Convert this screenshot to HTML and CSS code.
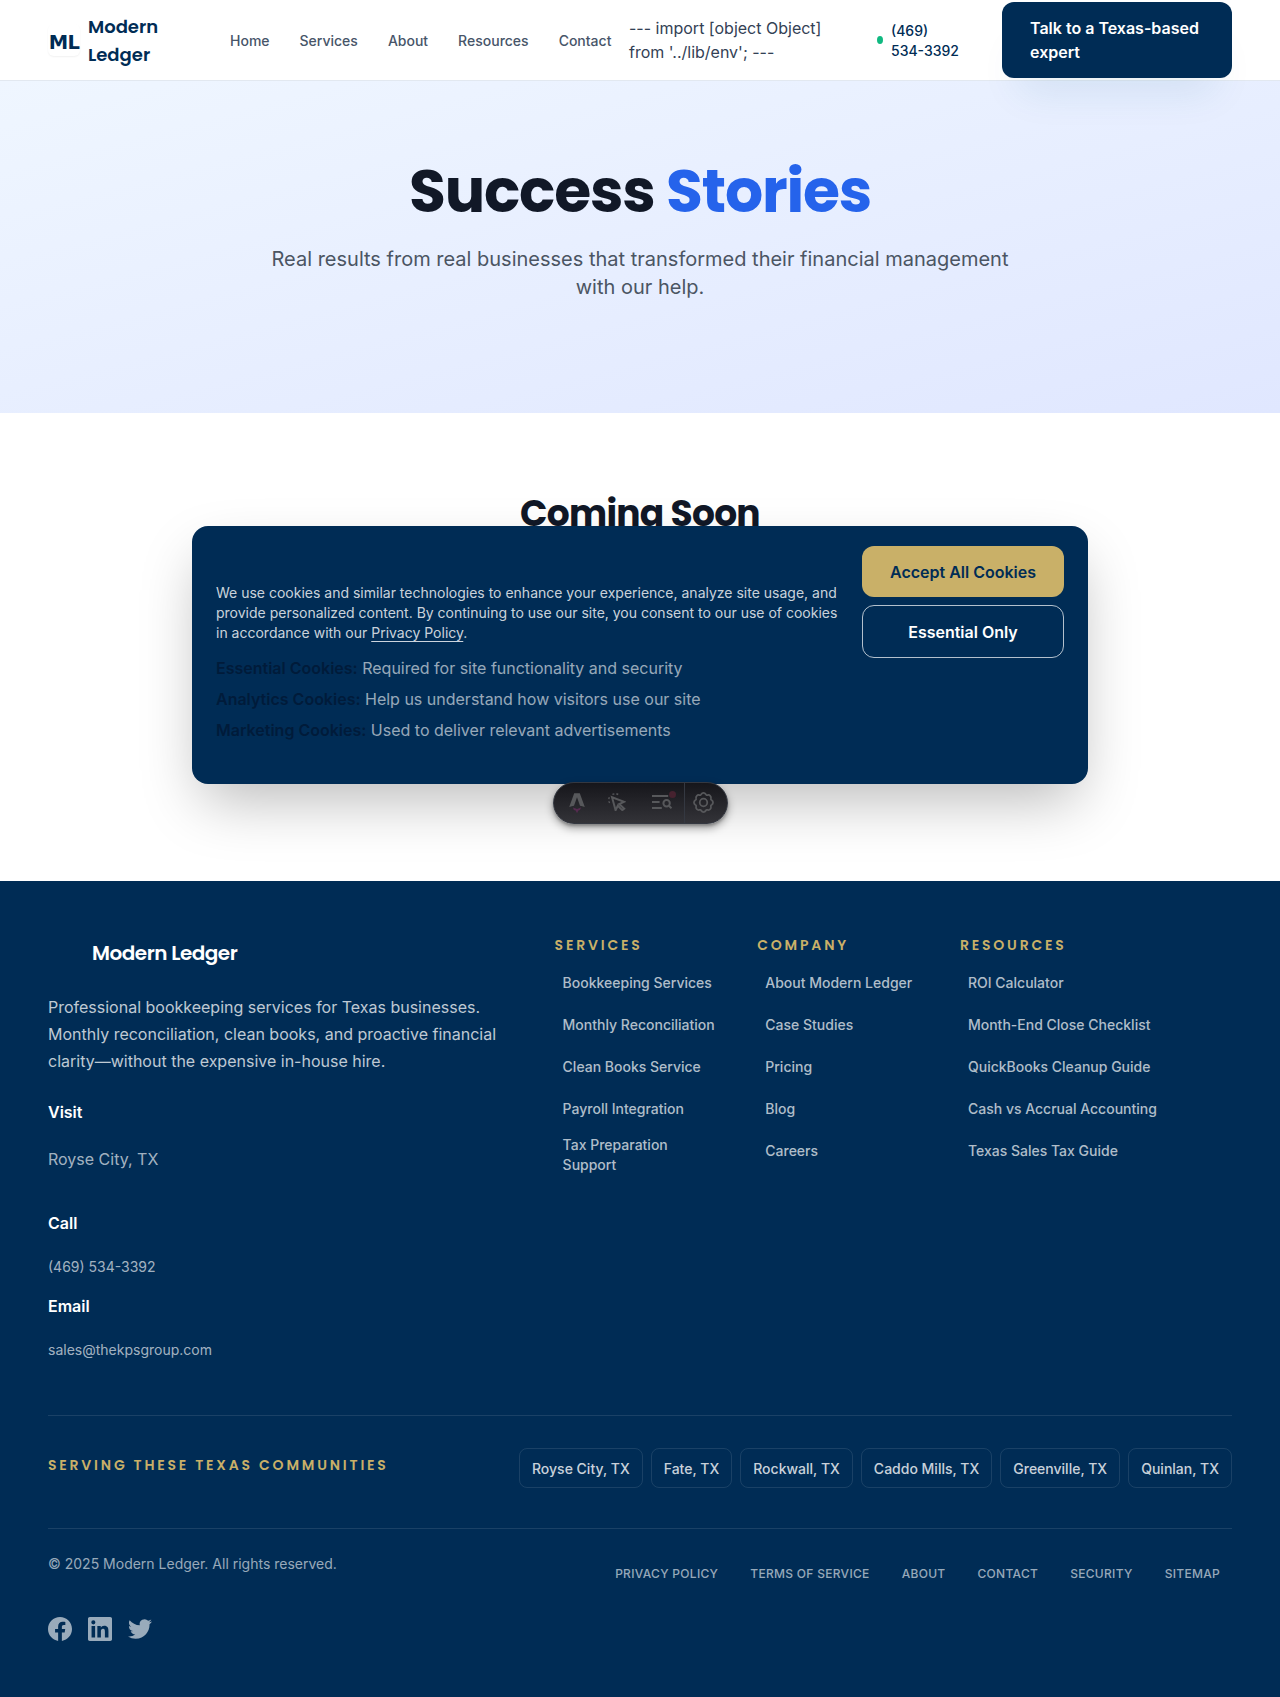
FILE: index.html
```html
<!DOCTYPE html>
<html lang="en">
<head>
<meta charset="utf-8">
<title>Success Stories | Modern Ledger</title>
<link rel="stylesheet" href="styles.css">
</head>
<body>
<header class="site-header">
  <a class="brand">
    <span class="brand-mark">ML</span>
    <span class="brand-name">Modern<br>Ledger</span>
  </a>
  <nav class="main-nav">
    <a>Home</a><a>Services</a><a>About</a><a>Resources</a><a>Contact</a>
  </nav>
  <div class="env-note">--- import [object Object]<br>from '../lib/env'; ---</div>
  <a class="phone"><span class="dot"></span><span class="number">(469)<br>534-3392</span></a>
  <a class="cta">Talk to a Texas-based<br>expert</a>
</header>

<main>
  <section class="hero">
    <h1><span class="ink">Success</span> <span class="accent">Stories</span></h1>
    <p>Real results from real businesses that transformed their financial management<br>with our help.</p>
  </section>
  <section class="soon">
    <h2>Coming Soon</h2>
  </section>
</main>

<footer class="footer">
  <div class="footer-top">
    <div class="about">
      <div class="footer-brand">Modern Ledger</div>
      <p class="blurb">Professional bookkeeping services for Texas businesses.<br>Monthly reconciliation, clean books, and proactive financial<br>clarity—without the expensive in-house hire.</p>
      <div class="label">Visit</div>
      <div class="value place">Royse City, TX</div>
      <div class="label">Call</div>
      <div class="value small">(469) 534-3392</div>
      <div class="label">Email</div>
      <div class="value small">sales@thekpsgroup.com</div>
    </div>
    <div class="links">
      <h3>SERVICES</h3>
      <a>Bookkeeping Services</a><a>Monthly Reconciliation</a><a>Clean Books Service</a><a>Payroll Integration</a><a class="two-line">Tax Preparation<br>Support</a>
    </div>
    <div class="links">
      <h3>COMPANY</h3>
      <a>About Modern Ledger</a><a>Case Studies</a><a>Pricing</a><a>Blog</a><a>Careers</a>
    </div>
    <div class="links">
      <h3>RESOURCES</h3>
      <a>ROI Calculator</a><a>Month-End Close Checklist</a><a>QuickBooks Cleanup Guide</a><a>Cash vs Accrual Accounting</a><a>Texas Sales Tax Guide</a>
    </div>
  </div>
  <div class="communities">
    <h3>SERVING THESE TEXAS COMMUNITIES</h3>
    <div class="pills">
      <a>Royse City, TX</a><a>Fate, TX</a><a>Rockwall, TX</a><a>Caddo Mills, TX</a><a>Greenville, TX</a><a>Quinlan, TX</a>
    </div>
  </div>
  <div class="bottom">
    <div>
      <p class="copyright">© 2025 Modern Ledger. All rights reserved.</p>
      <div class="social">
        <svg viewBox="0 0 24 24"><path d="M24 12.073c0-6.627-5.373-12-12-12s-12 5.373-12 12c0 5.99 4.388 10.954 10.125 11.854v-8.385H7.078v-3.47h3.047V9.43c0-3.007 1.792-4.669 4.533-4.669 1.312 0 2.686.235 2.686.235v2.953H15.83c-1.491 0-1.956.925-1.956 1.874v2.25h3.328l-.532 3.47h-2.796v8.385C19.612 23.027 24 18.062 24 12.073z"/></svg>
        <svg viewBox="0 0 24 24"><path d="M20.447 20.452h-3.554v-5.569c0-1.328-.027-3.037-1.852-3.037-1.853 0-2.136 1.445-2.136 2.939v5.667H9.351V9h3.414v1.561h.046c.477-.9 1.637-1.85 3.37-1.85 3.601 0 4.267 2.37 4.267 5.455v6.286zM5.337 7.433a2.062 2.062 0 0 1-2.063-2.065 2.064 2.064 0 1 1 2.063 2.065zm1.782 13.019H3.555V9h3.564v11.452zM22.225 0H1.771C.792 0 0 .774 0 1.729v20.542C0 23.227.792 24 1.771 24h20.451C23.2 24 24 23.227 24 22.271V1.729C24 .774 23.2 0 22.222 0h.003z"/></svg>
        <svg viewBox="0 0 24 24"><path d="M23.953 4.57a10 10 0 0 1-2.825.775 4.958 4.958 0 0 0 2.163-2.723c-.951.555-2.005.959-3.127 1.184a4.92 4.92 0 0 0-8.384 4.482C7.69 8.095 4.067 6.13 1.64 3.162a4.822 4.822 0 0 0-.666 2.475c0 1.71.87 3.213 2.188 4.096a4.904 4.904 0 0 1-2.228-.616v.06a4.923 4.923 0 0 0 3.946 4.827 4.996 4.996 0 0 1-2.212.085 4.936 4.936 0 0 0 4.604 3.417 9.867 9.867 0 0 1-6.102 2.105c-.39 0-.779-.023-1.17-.067a13.995 13.995 0 0 0 7.557 2.209c9.053 0 13.998-7.496 13.998-13.985 0-.21 0-.42-.015-.63A9.935 9.935 0 0 0 24 4.59z"/></svg>
      </div>
    </div>
    <nav class="legal">
      <a>PRIVACY POLICY</a><a>TERMS OF SERVICE</a><a>ABOUT</a><a>CONTACT</a><a>SECURITY</a><a>SITEMAP</a>
    </nav>
  </div>
</footer>

<aside class="cookie">
  <div class="cookie-text">
    <p>We use cookies and similar technologies to enhance your experience, analyze site usage, and<br>provide personalized content. By continuing to use our site, you consent to our use of cookies<br>in accordance with our <a>Privacy Policy</a>.</p>
    <ul>
      <li><strong>Essential Cookies:</strong> Required for site functionality and security</li>
      <li><strong>Analytics Cookies:</strong> Help us understand how visitors use our site</li>
      <li><strong>Marketing Cookies:</strong> Used to deliver relevant advertisements</li>
    </ul>
  </div>
  <div class="cookie-actions">
    <button class="accept">Accept All Cookies</button>
    <button class="essential">Essential Only</button>
  </div>
</aside>

<div class="devbar">
  <svg class="i-astro" viewBox="0 0 16 20"><path class="rocket" d="M4 14.6 8 16l4-1.4-1 2.4-1.6.6L8 20.2l-1.3-2.7L4.8 17z"/><path d="M5.2.2h5.600L15.800 14c-1.800-.8-3.400-1.100-4.800-1.300L8 4.200 5 12.700c-1.400.2-3 .5-4.800 1.300z"/></svg>
  <svg class="i-pointer" viewBox="0 0 18 18"><path d="M4 4.200 16.200 8.800 11.200 11l5 4.600-1.900 1.500-4.500-4.400-2.200 4.500z"/><path d="M5.600 1.800 5.200.4M9 1.800l.6-1.400M1.700 5.400.4 5M1.800 8.800l-1.200.6"/></svg>
  <svg class="i-audit" viewBox="0 0 20 16"><path d="M0 2.100h16.200M0 8h7.600M0 14h9.800"/><circle cx="14.600" cy="9.300" r="3.200"/><path d="m17 11.700 2.500 2.600"/></svg>
  <span class="badge"></span>
  <span class="sep"></span>
  <svg class="i-gear" viewBox="0 0 24 24"><path d="M21.470 9.460A3 3 0 0 1 21.470 14.540A1.800 1.800 0 0 0 20.490 16.900A3 3 0 0 1 16.900 20.490A1.800 1.800 0 0 0 14.540 21.470A3 3 0 0 1 9.460 21.470A1.800 1.800 0 0 0 7.100 20.490A3 3 0 0 1 3.510 16.900A1.800 1.800 0 0 0 2.530 14.540A3 3 0 0 1 2.530 9.460A1.800 1.800 0 0 0 3.510 7.100A3 3 0 0 1 7.100 3.510A1.800 1.800 0 0 0 9.460 2.530A3 3 0 0 1 14.540 2.530A1.800 1.800 0 0 0 16.900 3.510A3 3 0 0 1 20.490 7.100A1.800 1.800 0 0 0 21.470 9.460z"/><circle cx="12" cy="12" r="4.300"/></svg>
</div>
</body>
</html>
```
FILE: styles.css
```css
* { box-sizing: border-box; }
body { margin: 0; position: relative; width: 1280px; font-family: Inter, sans-serif; font-size: 16px; line-height: 24px; color: #334155; background: #fff; }
h1, h2, h3, p, ul { margin: 0; padding: 0; }
h1, h2, h3, .brand-name, .footer-brand { font-family: Poppins, Inter, sans-serif; }
a { white-space: nowrap; }

.site-header { height: 81px; display: flex; align-items: center; padding: 0 48px 1px; border-bottom: 1px solid #e2e8f0; background: #fff; }
.brand { display: flex; align-items: center; gap: 8px; width: 182px; }
.brand-mark { width: 32px; height: 32px; border-radius: 6px; box-shadow: 0 1px 2px rgba(0,0,0,.06); font: bold 19.500px/37px "DejaVu Sans", sans-serif; letter-spacing: -.6px; color: #002c55; display: flex; justify-content: center; }
.brand-name { font-size: 18px; line-height: 28px; font-weight: 600; color: #002c55; padding-top: 3px; }
.main-nav { display: flex; gap: 30px; width: 399px; padding-top: 2px; font-size: 14px; font-weight: 500; color: #475569; }
.env-note { width: 248px; padding-top: 1px; white-space: nowrap; }
.phone { display: flex; align-items: center; gap: 8px; width: 125px; font-size: 14px; line-height: 20px; font-weight: 500; color: #002c55; }
.number { padding-top: 2px; }
.dot { width: 6px; height: 8px; border-radius: 50%; background: #10b981; }
.cta { width: 230px; height: 76px; padding: 14px 28px; border-radius: 12px; background: #002c55; color: #fff; font-weight: 600; box-shadow: 0 30px 40px -18px rgba(0,90,140,.11); }

.hero { height: 332px; padding-top: 74px; text-align: center; background: linear-gradient(to bottom right, #eff6ff 0%, #e0e7ff 100%); }
h1 { font-size: 60px; line-height: 72px; font-weight: 700; letter-spacing: -1.200px; }
.ink { color: #111827; }
.accent { color: #2563eb; }
.hero p { margin-top: 18px; font-size: 20px; line-height: 28px; color: #4b5563; }
.soon { height: 468px; padding-top: 81px; text-align: center; }
h2 { font-size: 36px; line-height: 40px; font-weight: 700; letter-spacing: -.72px; color: #111827; }

.footer { height: 816px; padding: 0 48px; background: #002c55; color: #fff; }
.footer-top { height: 535px; display: grid; grid-template-columns: 506.600px 202.700px 202.700px 272px; border-bottom: 1px solid rgba(255,255,255,.1); }
.about { padding-top: 58px; }
.footer-brand { padding-left: 44px; font-size: 20px; line-height: 28px; font-weight: 600; letter-spacing: -.5px; }
.blurb { margin: 27px 0 24px; line-height: 27.200px; color: rgba(255,255,255,.75); }
.label { font-weight: 600; margin-bottom: 22px; }
.value { color: rgba(255,255,255,.65); }
.place { margin: 23px 0 40px; }
.small { font-size: 14px; line-height: 20px; margin-bottom: 17px; }
h3 { font-size: 14px; line-height: 20px; font-weight: 600; letter-spacing: 2.800px; color: #c9b068; }
.links { padding-top: 54px; }
.links h3 { margin-bottom: 7px; }
.links a { display: flex; align-items: center; height: 42px; padding-left: 8px; font-size: 14px; line-height: 20px; font-weight: 500; color: rgba(255,255,255,.7); }
.links .two-line { height: 50px; }
.communities { height: 113px; display: flex; justify-content: space-between; padding-top: 32px; border-bottom: 1px solid rgba(255,255,255,.1); }
.communities h3 { margin-top: 7px; }
.pills { display: flex; gap: 8px; }
.pills a { height: 40px; padding: 0 12px; border: 1px solid rgba(255,255,255,.1); border-radius: 8px; font-size: 14px; line-height: 40px; font-weight: 500; color: rgba(255,255,255,.8); }
.bottom { display: flex; justify-content: space-between; padding-top: 25px; }
.copyright { font-size: 14px; line-height: 20px; color: rgba(255,255,255,.6); }
.social { display: flex; gap: 16px; margin-top: 43px; }
.social svg { width: 24px; height: 24px; fill: #99abbb; }
.legal { display: flex; gap: 32px; padding: 10px 12px 0 0; font-size: 12px; line-height: 20px; font-weight: 500; letter-spacing: .3px; color: rgba(255,255,255,.6); }

/* Cookie consent, floating over the page */
.cookie { position: absolute; left: 192px; top: 526px; width: 896px; height: 258px; padding: 20px 24px; display: flex; justify-content: space-between; border-radius: 16px; background: #002c55; box-shadow: 0 25px 60px -10px rgba(0,0,0,.28); }
.cookie-text { padding-top: 37px; white-space: nowrap; }
.cookie p { font-size: 14px; line-height: 20px; color: rgba(255,255,255,.8); }
.cookie p a { text-decoration: underline; text-underline-offset: 3px; }
.cookie ul { list-style: none; margin-top: 10px; color: rgba(255,255,255,.6); }
.cookie li { line-height: 31px; }
.cookie strong { font-weight: 600; color: #001b3a; }
.cookie-actions { display: flex; flex-direction: column; gap: 8px; width: 202px; }
.cookie button { font: 600 16px/24px Inter, sans-serif; border-radius: 12px; padding: 0; }
.cookie .accept { height: 51px; border: 0; background: #c9b068; color: #002c55; }
.cookie .essential { height: 53px; border: 1px solid rgba(255,255,255,.7); background: transparent; color: #fff; }

/* Developer toolbar, floating over the page */
.devbar { position: absolute; left: 553px; top: 782px; width: 175px; height: 42px; border: 1px solid #343841; border-radius: 21px; background: linear-gradient(180deg, #16161b, #333338); box-shadow: 0 4px 8px rgba(0,0,0,.35), 0 2px 3px rgba(0,0,0,.25); }
.devbar svg, .badge, .sep { position: absolute; }
.devbar svg { fill: #57585b; }
.devbar .i-astro { left: 15px; top: 10px; width: 16px; height: 20px; }
.devbar .rocket { fill: #562b50; }
.devbar .i-pointer, .devbar .i-audit, .devbar .i-gear { fill: none; stroke: #57585b; stroke-width: 2; }
.i-pointer { left: 54px; top: 10px; width: 18px; height: 18px; }
.i-audit { left: 98px; top: 11px; width: 20px; height: 16px; }
.i-gear { left: 139px; top: 9px; width: 21px; height: 21px; }
.badge { left: 115px; top: 8px; width: 7px; height: 7px; border-radius: 50%; background: #46222f; }
.sep { left: 130px; top: 0; width: 1px; height: 40px; background: #343841; }
```
